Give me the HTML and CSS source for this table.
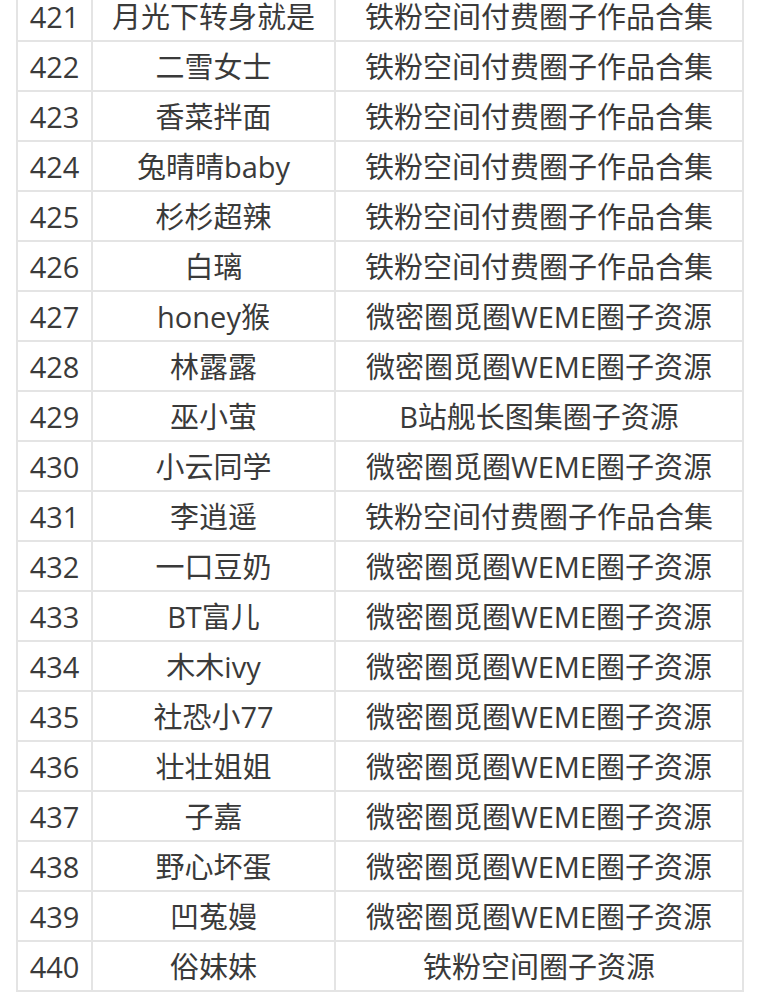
FILE: index.html
```html
<!DOCTYPE html>
<html lang="zh-CN">
<head>
<meta charset="utf-8">
<title>列表</title>
<link rel="stylesheet" href="styles.css">
</head>
<body>
<table class="list">
  <colgroup><col class="c-num"><col class="c-name"><col class="c-src"></colgroup>
  <tbody>
    <tr><td>421</td><td>月光下转身就是</td><td>铁粉空间付费圈子作品合集</td></tr>
    <tr><td>422</td><td>二雪女士</td><td>铁粉空间付费圈子作品合集</td></tr>
    <tr><td>423</td><td>香菜拌面</td><td>铁粉空间付费圈子作品合集</td></tr>
    <tr><td>424</td><td>兔晴晴baby</td><td>铁粉空间付费圈子作品合集</td></tr>
    <tr><td>425</td><td>杉杉超辣</td><td>铁粉空间付费圈子作品合集</td></tr>
    <tr><td>426</td><td>白璃</td><td>铁粉空间付费圈子作品合集</td></tr>
    <tr><td>427</td><td>honey猴</td><td>微密圈觅圈WEME圈子资源</td></tr>
    <tr><td>428</td><td>林露露</td><td>微密圈觅圈WEME圈子资源</td></tr>
    <tr><td>429</td><td>巫小萤</td><td>B站舰长图集圈子资源</td></tr>
    <tr><td>430</td><td>小云同学</td><td>微密圈觅圈WEME圈子资源</td></tr>
    <tr><td>431</td><td>李逍遥</td><td>铁粉空间付费圈子作品合集</td></tr>
    <tr><td>432</td><td>一口豆奶</td><td>微密圈觅圈WEME圈子资源</td></tr>
    <tr><td>433</td><td>BT富儿</td><td>微密圈觅圈WEME圈子资源</td></tr>
    <tr><td>434</td><td>木木ivy</td><td>微密圈觅圈WEME圈子资源</td></tr>
    <tr><td>435</td><td>社恐小77</td><td>微密圈觅圈WEME圈子资源</td></tr>
    <tr><td>436</td><td>壮壮姐姐</td><td>微密圈觅圈WEME圈子资源</td></tr>
    <tr><td>437</td><td>子嘉</td><td>微密圈觅圈WEME圈子资源</td></tr>
    <tr><td>438</td><td>野心坏蛋</td><td>微密圈觅圈WEME圈子资源</td></tr>
    <tr><td>439</td><td>凹菟嫚</td><td>微密圈觅圈WEME圈子资源</td></tr>
    <tr><td>440</td><td>俗妹妹</td><td>铁粉空间圈子资源</td></tr>
  </tbody>
</table>
</body>
</html>
```
FILE: styles.css
```css
html, body {
  margin: 0;
  padding: 0;
  background: #ffffff;
}
body {
  font-family: "Open Sans", "Noto Sans CJK SC", sans-serif;
  color: #3a3a3a;
}
.list {
  border-collapse: collapse;
  table-layout: fixed;
  width: 726px;
  margin: -10px 0 0 16px;
}
.c-num { width: 75px; }
.c-name { width: 243px; }
.c-src { width: 408px; }
.list td {
  border: 2px solid #e4e4e4;
  height: 48px;
  padding: 0;
  text-align: center;
  vertical-align: middle;
  font-size: 29px;
  line-height: 29px;
  white-space: nowrap;
}
```
